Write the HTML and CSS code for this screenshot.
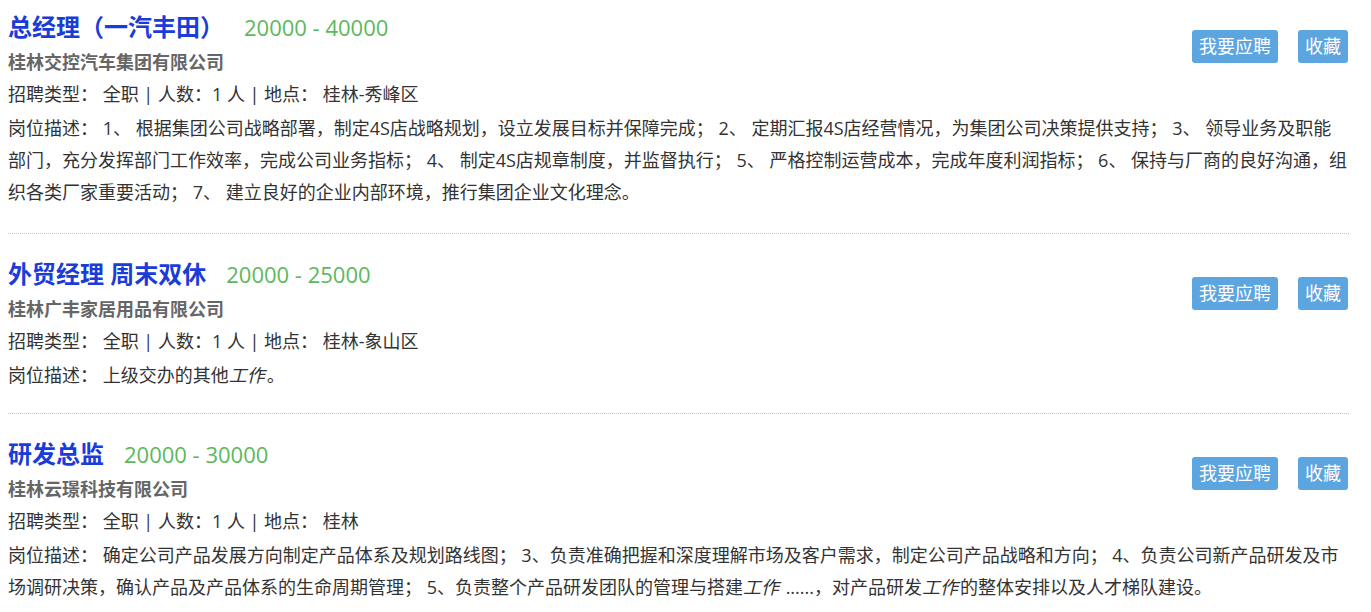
FILE: index.html
```html
<!DOCTYPE html>
<html lang="zh-CN">
<head>
  <meta charset="UTF-8" />
  <meta name="viewport" content="width=device-width, initial-scale=1.0"/>
  <title>招聘信息</title>
  <link rel="stylesheet" href="styles.css">
</head>
<body>

  <ul class="job-list">

    <li class="job">
      <div class="actions">
        <a class="btn" href="#">我要应聘</a>
        <a class="btn" href="#">收藏</a>
      </div>
      <h3 class="job-title">总经理（一汽丰田）<span class="salary">20000 - 40000</span></h3>
      <p class="company">桂林交控汽车集团有限公司</p>
      <p class="meta">招聘类型： 全职 | 人数：1 人 | 地点： 桂林-秀峰区</p>
      <p class="desc">岗位描述： 1、 根据集团公司战略部署，制定4S店战略规划，设立发展目标并保障完成； 2、 定期汇报4S店经营情况，为集团公司决策提供支持； 3、 领导业务及职能部门，充分发挥部门工作效率，完成公司业务指标； 4、 制定4S店规章制度，并监督执行； 5、 严格控制运营成本，完成年度利润指标； 6、 保持与厂商的良好沟通，组织各类厂家重要活动； 7、 建立良好的企业内部环境，推行集团企业文化理念。</p>
    </li>

    <li class="job">
      <div class="actions">
        <a class="btn" href="#">我要应聘</a>
        <a class="btn" href="#">收藏</a>
      </div>
      <h3 class="job-title">外贸经理 周末双休<span class="salary">20000 - 25000</span></h3>
      <p class="company">桂林广丰家居用品有限公司</p>
      <p class="meta">招聘类型： 全职 | 人数：1 人 | 地点： 桂林-象山区</p>
      <p class="desc">岗位描述： 上级交办的其他<em>工作</em>。</p>
    </li>

    <li class="job">
      <div class="actions">
        <a class="btn" href="#">我要应聘</a>
        <a class="btn" href="#">收藏</a>
      </div>
      <h3 class="job-title">研发总监<span class="salary">20000 - 30000</span></h3>
      <p class="company">桂林云璟科技有限公司</p>
      <p class="meta">招聘类型： 全职 | 人数：1 人 | 地点： 桂林</p>
      <p class="desc">岗位描述： 确定公司产品发展方向制定产品体系及规划路线图； 3、负责准确把握和深度理解市场及客户需求，制定公司产品战略和方向； 4、负责公司新产品研发及市场调研决策，确认产品及产品体系的生命周期管理； 5、负责整个产品研发团队的管理与搭建<em>工作</em> ......，对产品研发<em>工作</em>的整体安排以及人才梯队建设。</p>
    </li>

  </ul>

</body>
</html>
```

FILE: styles.css
```css
body {
  margin: 0;
  font-family: "Open Sans", "Noto Sans CJK SC", sans-serif;
  font-size: 18px;
  color: #333;
  background: #fff;
}

.job-list {
  list-style: none;
  margin: 0;
  padding: 0 22px 0 8px;
}

.job {
  padding: 21px 0 22px;
  border-bottom: 1px dotted #c4c4c4;
}

.job:first-child {
  padding-top: 8px;
  padding-bottom: 25px;
}

.job p {
  margin: 0;
  line-height: 32px;
}

.job-title {
  margin: 0;
  font-size: 24px;
  line-height: 38px;
  font-weight: bold;
  color: #1a3cd8;
}

.salary {
  margin-left: 20px;
  font-size: 22px;
  font-weight: normal;
  color: #5cb85c;
}

.company {
  font-weight: bold;
  color: #666;
}

.job .desc {
  margin-top: 2px;
}

.desc em {
  font-style: italic;
  padding-right: 2px;
}

/* buttons on the right of each job */
.actions {
  float: right;
  display: flex;
  gap: 20px;
  margin: 22px 1px 0 0;
}

.btn {
  display: block;
  padding: 0 7px;
  line-height: 33px;
  font-size: 18px;
  color: #fff;
  background: #5da5de;
  border-radius: 3px;
  text-decoration: none;
}
```
